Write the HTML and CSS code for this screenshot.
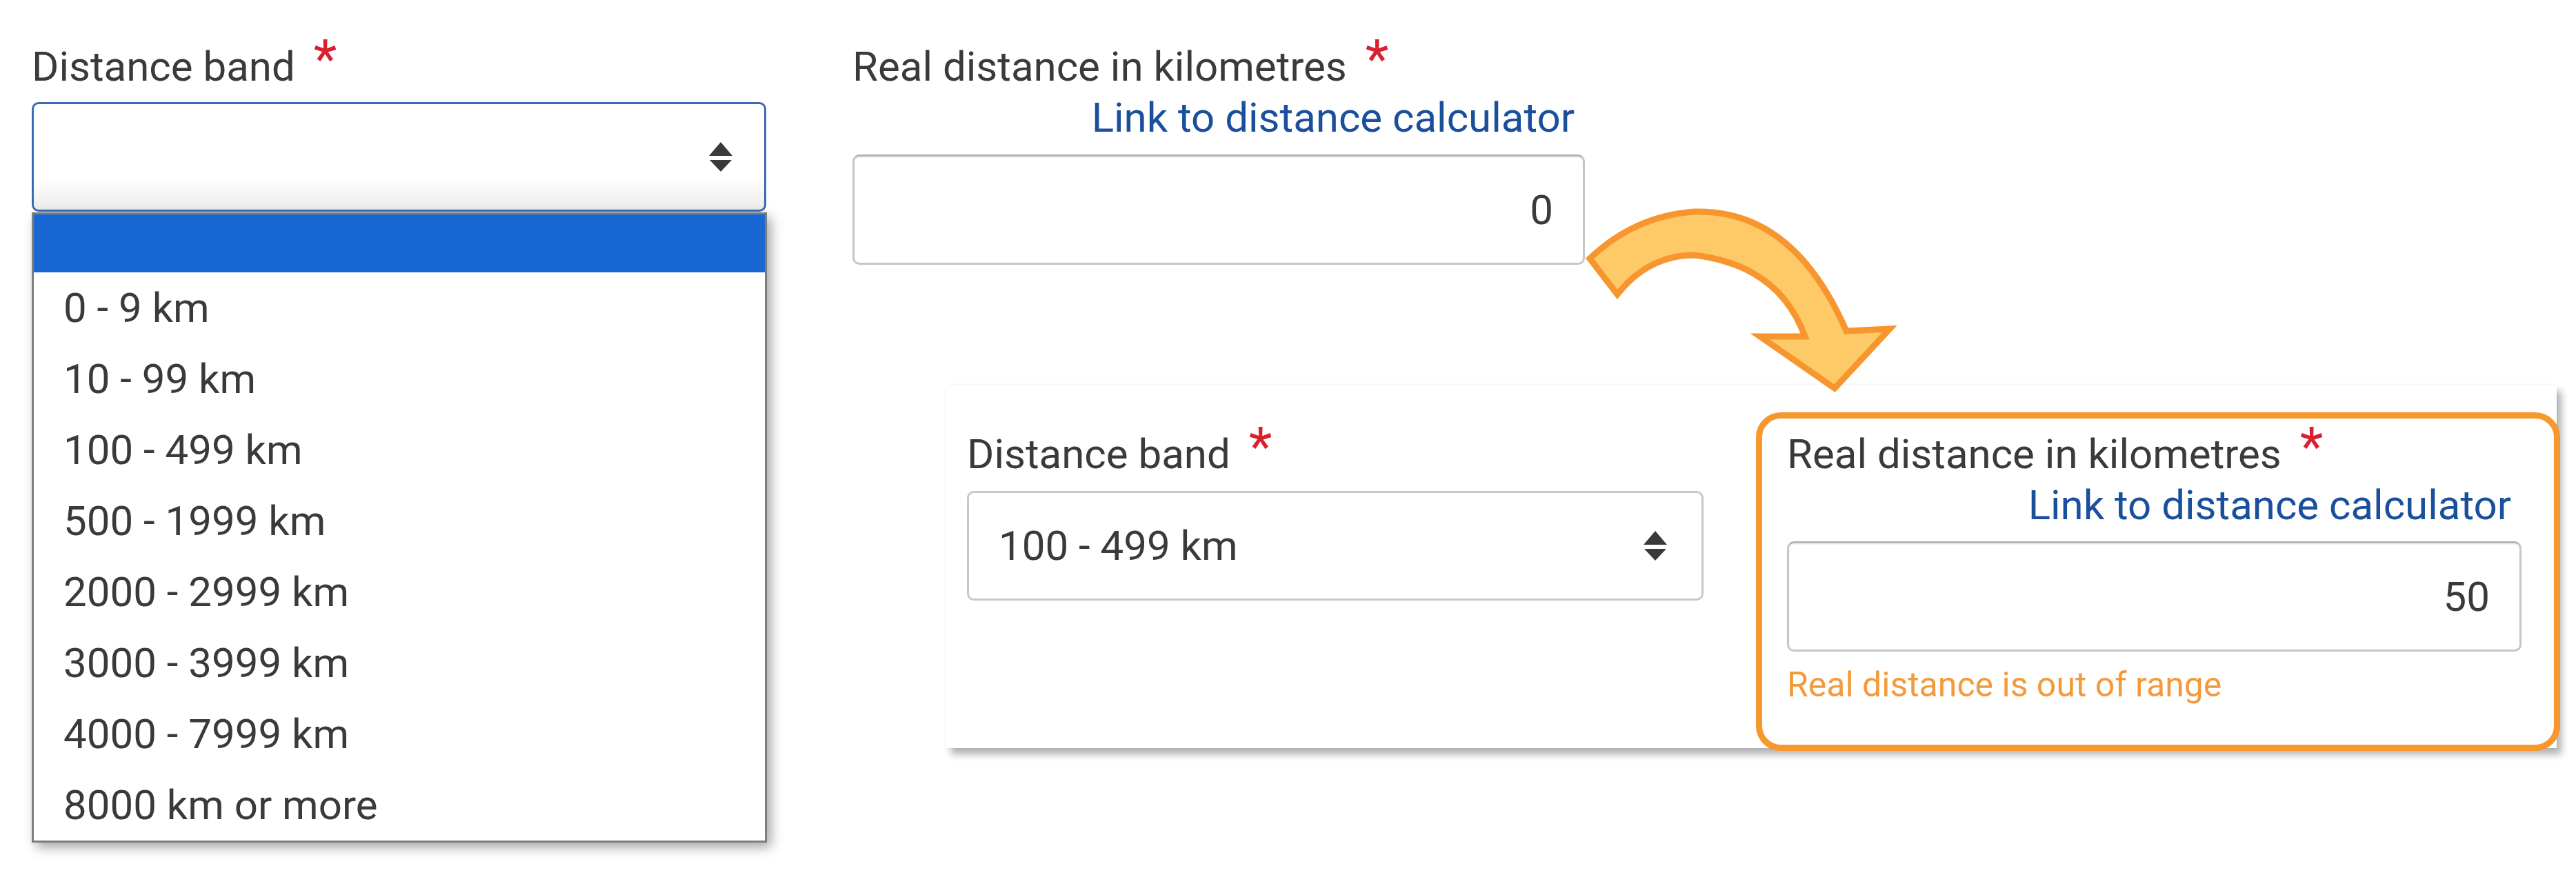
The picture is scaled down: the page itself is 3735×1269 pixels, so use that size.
FILE: index.html
```html
<!DOCTYPE html>
<html>
<head>
<title>Distance band</title>
<link rel="stylesheet" href="styles.css">
</head>
<body>
<div class="page">

  <div class="row">
    <div class="field field-band">
      <label class="label">Distance band <span class="req">*</span></label>
      <div class="select-wrap">
        <div class="select is-open">
          <span class="select-value"></span>
          <svg class="updown" viewBox="0 0 34 44" width="34" height="44"><path d="M0 20 L17 0 L34 20 Z M1 26 L33 26 L17 43 Z"/></svg>
        </div>
        <ul class="options">
          <li class="option is-active"></li>
          <li class="option">0 - 9 km</li>
          <li class="option">10 - 99 km</li>
          <li class="option">100 - 499 km</li>
          <li class="option">500 - 1999 km</li>
          <li class="option">2000 - 2999 km</li>
          <li class="option">3000 - 3999 km</li>
          <li class="option">4000 - 7999 km</li>
          <li class="option">8000 km or more</li>
        </ul>
      </div>
    </div>

    <div class="field field-real">
      <label class="label">Real distance in kilometres <span class="req">*</span></label>
      <a class="calc-link" href="#">Link to distance calculator</a>
      <input class="input" type="text" value="0">
    </div>
  </div>

  <div class="card">
    <div class="field card-band">
      <label class="label">Distance band <span class="req">*</span></label>
      <div class="select">
        <span class="select-value">100 - 499 km</span>
        <svg class="updown" viewBox="0 0 34 44" width="34" height="44"><path d="M0 20 L17 0 L34 20 Z M1 26 L33 26 L17 43 Z"/></svg>
      </div>
    </div>
    <div class="field card-real has-error">
      <label class="label">Real distance in kilometres <span class="req">*</span></label>
      <a class="calc-link" href="#">Link to distance calculator</a>
      <input class="input" type="text" value="50">
      <div class="error-text">Real distance is out of range</div>
    </div>
  </div>

  <!-- curved arrow between the two states -->
  <svg class="swoop" viewBox="0 0 460 280" width="460" height="280">
    <path d="M15 80 Q80 18 167 12 Q310 8 387 185 L450 182 L370 268 L262 193 L327 193 Q290 90 167 75 Q100 75 55 132 Z"/>
  </svg>

</div>
</body>
</html>
```

FILE: styles.css
```css
body {
  margin: 0;
  padding: 0;
  background-color: white;
  font-family: Roboto, "Liberation Sans", sans-serif;
  font-size: 60px;
  color: #3a3a3a;
}
.page {
  position: relative;
  box-sizing: border-box;
  height: 1269px;
  padding: 62px 0 0 46px;
  overflow: hidden;
}
.row {
  display: flex;
  gap: 125px;
  align-items: flex-start;
}
.field {
  display: flex;
  flex-direction: column;
  flex-shrink: 0;
}
.field-band {
  width: 1065px;
}
.field-real {
  width: 1062px;
}
.label {
  display: block;
  line-height: 70px;
  height: 70px;
}
.req {
  color: #d9202f;
  font-size: 78px;
  line-height: 0;
  vertical-align: 4px;
  margin-left: 12px;
}
.select-wrap {
  position: relative;
  margin-top: 16px;
}
.select {
  box-sizing: border-box;
  height: 159px;
  display: flex;
  align-items: center;
  justify-content: space-between;
  padding: 0 46px 0 43px;
  border: 3px solid #c8c8c8;
  border-radius: 10px;
  background-color: white;
  line-height: 70px;
}
.select.is-open {
  border-color: #3b6cb3;
  background: linear-gradient(to bottom, #ffffff 70%, #ececec);
}
.updown {
  fill: #3a3a3a;
  flex-shrink: 0;
}
.options {
  position: absolute;
  top: calc(100% + 1px);
  left: 0;
  right: -1px;
  margin: 0;
  padding: 0;
  list-style: none;
  background-color: white;
  border: 3px solid #7d7d7d;
  box-shadow: 6px 7px 16px rgba(0, 0, 0, 0.35);
  z-index: 5;
}
.option {
  height: 103px;
  line-height: 103px;
  padding-left: 43px;
}
.option.is-active {
  height: 84px;
  background-color: #1967d2;
}
.calc-link {
  display: block;
  margin-top: 4px;
  padding-right: 15px;
  line-height: 70px;
  text-align: right;
  color: #1a4f9c;
  text-decoration: none;
}
.input {
  box-sizing: border-box;
  width: 100%;
  height: 160px;
  margin: 18px 0 0 0;
  padding: 0 43px;
  border: 3px solid #c6c6c6;
  border-top-color: #b4b4b4;
  border-radius: 10px;
  box-shadow: inset 0 2px 2px rgba(0, 0, 0, 0.06);
  font-family: inherit;
  font-size: 60px;
  color: #3a3a3a;
  text-align: right;
  background-color: white;
  outline: none;
}
.card {
  display: flex;
  align-items: flex-start;
  gap: 76px;
  width: 2335px;
  height: 527px;
  box-sizing: border-box;
  margin: 174px 0 0 1326px;
  padding: 40px 0 0 30px;
  background-color: white;
  box-shadow: 0 0 3px rgba(0, 0, 0, 0.07), 7px 9px 10px rgba(0, 0, 0, 0.3);
}
.card-band {
  width: 1068px;
  margin-top: 26px;
}
.card-band .select {
  margin-top: 18px;
  padding-right: 50px;
}
.card-real {
  box-sizing: border-box;
  width: 1166px;
  padding: 17px 47px 58px 36px;
  border: 9px solid #f7982f;
  border-radius: 36px;
  margin-bottom: -5px;
}
.card-real .input {
  margin-top: 17px;
}
.error-text {
  margin-top: 19px;
  font-size: 50px;
  line-height: 58px;
  color: #f39a3c;
}
.swoop {
  position: absolute;
  left: 2290px;
  top: 295px;
  fill: #fec967;
  stroke: #f7962e;
  stroke-width: 9;
  stroke-linejoin: miter;
  z-index: 6;
}
```
